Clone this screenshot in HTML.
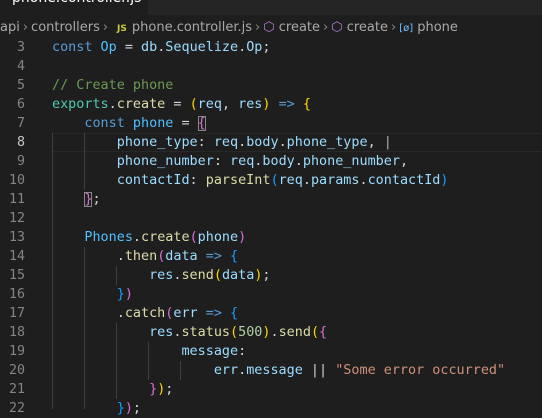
<!DOCTYPE html>
<html><head><style>
body{margin:0;width:542px;height:409px;overflow:hidden;background:#1e1e1e;font-family:"DejaVu Sans Mono","Liberation Mono",monospace;position:relative}
.tabs{position:absolute;left:0;top:0;width:542px;height:15px;background:#252526;overflow:hidden}
.tab{position:absolute;left:0;top:0;width:148px;height:15px;background:#1e1e1e;color:#fff;font:14px "DejaVu Sans","Liberation Sans",sans-serif;overflow:hidden}
.bc{position:absolute;left:0;top:17px;height:22px;width:542px;font:13px "DejaVu Sans","Liberation Sans",sans-serif;color:#a9a9a9;line-height:22px;white-space:nowrap}
.bc .s{color:#8a8a8a;margin:0 3px}
.js{color:#cbcb41;font-size:9px;font-weight:bold;margin:0 5px 0 6px}
.cube{color:#b180d7}
.ln{position:absolute;left:0;width:25px;text-align:right;color:#858585;font-size:13.3px;line-height:19px}
.code{position:absolute;left:20px;font-size:13.45px;line-height:19px;white-space:pre;color:#d4d4d4}
.k{color:#569cd6}.v{color:#9cdcfe}.c{color:#4fc1ff}.f{color:#dcdcaa}.cm{color:#6a9955}.st{color:#ce9178}.n{color:#b5cea8}
.b1{color:#ffd700}.b2{color:#da70d6}.b3{color:#179fff}
.g{position:absolute;width:1px;background:#404040}
.cur{position:absolute;left:52px;top:133px;width:490px;height:17px;border:1px solid #282828;border-right:none}
</style></head><body>
<div class="tabs"><div class="tab"><span style="position:absolute;top:-10px;left:12px;white-space:nowrap">phone.controller.js&nbsp; ×</span></div></div>
<div class="bc">api<span class="s">›</span>controllers<span class="s">›</span><span class="js">JS</span>phone.controller.js<span class="s">›</span><span class="cube">⬡</span> create<span class="s">›</span><span class="cube">⬡</span> create<span class="s">›</span><span style="color:#75beff;font-size:10px">[ø]</span> phone</div>
<div class="cur"></div>
<div class="g" style="left:52px;top:133px;height:276px"></div>
<div class="g" style="left:84px;top:133px;height:57px"></div>
<div class="g" style="left:84px;top:247px;height:162px"></div>
<div class="g" style="left:116px;top:266px;height:19px"></div>
<div class="g" style="left:116px;top:323px;height:76px"></div>
<div class="g" style="left:148px;top:342px;height:38px"></div>
<div class="g" style="left:180px;top:361px;height:19px"></div>
<div class="ln" style="top:38px">3<br>4<br>5<br>6<br>7<br><span style="color:#c6c6c6">8</span><br>9<br>10<br>11<br>12<br>13<br>14<br>15<br>16<br>17<br>18<br>19<br>20<br>21<br>22</div>
<div class="code" style="top:38px;left:52px"><span class="k">const</span> <span class="c">Op</span> = <span class="v">db</span>.<span class="v">Sequelize</span>.<span class="v">Op</span>;

<span class="cm">// Create phone</span>
<span class="v" style="color:#4ec9b0">exports</span>.<span class="f">create</span> = <span class="b1">(</span><span class="v">req</span>, <span class="v">res</span><span class="b1">)</span> <span class="k">=&gt;</span> <span class="b1">{</span>
    <span class="k">const</span> <span class="c">phone</span> = <span class="b2" style="outline:1px solid #888;outline-offset:-1px">{</span>
        <span class="v">phone_type</span>: <span class="v">req</span>.<span class="v">body</span>.<span class="v">phone_type</span>, <span style="color:#aeafad">|</span>
        <span class="v">phone_number</span>: <span class="v">req</span>.<span class="v">body</span>.<span class="v">phone_number</span>,
        <span class="v">contactId</span>: <span class="f">parseInt</span><span class="b3">(</span><span class="v">req</span>.<span class="v">params</span>.<span class="v">contactId</span><span class="b3">)</span>
    <span class="b2" style="outline:1px solid #888;outline-offset:-1px">}</span>;

    <span class="c">Phones</span>.<span class="f">create</span><span class="b2">(</span><span class="v">phone</span><span class="b2">)</span>
        .<span class="f">then</span><span class="b2">(</span><span class="v">data</span> <span class="k">=&gt;</span> <span class="b3">{</span>
            <span class="v">res</span>.<span class="f">send</span><span class="b1">(</span><span class="v">data</span><span class="b1">)</span>;
        <span class="b3">}</span><span class="b2">)</span>
        .<span class="f">catch</span><span class="b2">(</span><span class="v">err</span> <span class="k">=&gt;</span> <span class="b3">{</span>
            <span class="v">res</span>.<span class="f">status</span><span class="b1">(</span><span class="n">500</span><span class="b1">)</span>.<span class="f">send</span><span class="b1">(</span><span class="b2">{</span>
                <span class="v">message</span>:
                    <span class="v">err</span>.<span class="v">message</span> || <span class="st">"Some error occurred"</span>
            <span class="b2">}</span><span class="b1">)</span>;
        <span class="b3">}</span><span class="b2">)</span>;</div>
</body></html>
